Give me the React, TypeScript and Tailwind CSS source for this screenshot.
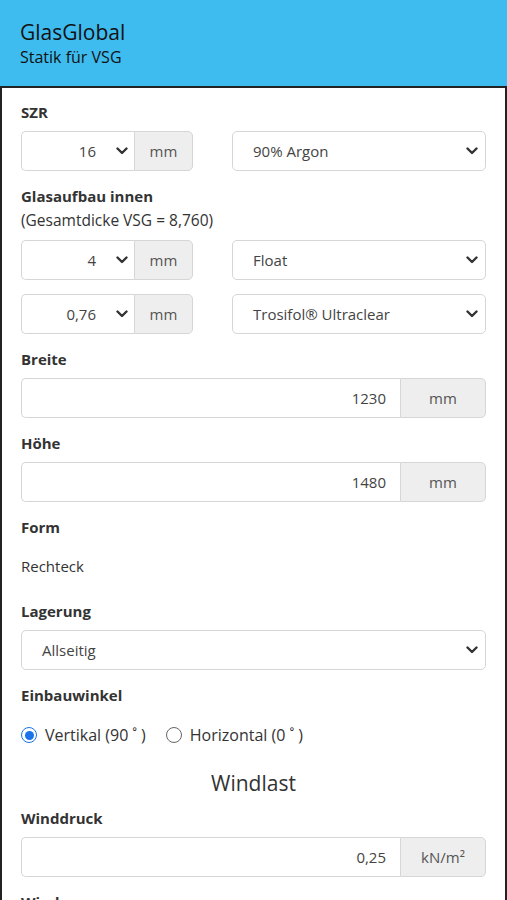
function Chevron() {
  return (
    <svg width="12" height="8" viewBox="0 0 12 8" fill="none" className="shrink-0">
      <path d="M1.5 1.5 L6 6 L10.5 1.5" stroke="#333" strokeWidth="2.4" strokeLinecap="round" strokeLinejoin="round" />
    </svg>
  );
}

function SmallSelect({ value }: { value: string }) {
  return (
    <div className="flex h-10 items-stretch">
      <div className="flex flex-1 items-center justify-end gap-[20px] rounded-l-[5px] border border-r-0 border-[#d6d6d6] bg-white pr-[6px] text-[#444]">
        <span>{value}</span>
        <Chevron />
      </div>
      <div className="flex w-[59px] items-center justify-center rounded-r-[5px] border border-[#d6d6d6] bg-[#eee] text-[#555]">
        mm
      </div>
    </div>
  );
}

function WideSelect({ value }: { value: string }) {
  return (
    <div className="flex h-10 items-center justify-between rounded-[5px] border border-[#d6d6d6] bg-white pl-[20px] pr-[7px] text-[#444]">
      <span>{value}</span>
      <Chevron />
    </div>
  );
}

function NumberInput({ value, unit }: { value: string; unit: string }) {
  return (
    <div className="flex h-10 items-stretch">
      <div className="flex flex-1 items-center justify-end rounded-l-[5px] border border-r-0 border-[#d6d6d6] bg-white pr-[14px] text-[#444]">
        {value}
      </div>
      <div className="flex w-[86px] items-center justify-center rounded-r-[5px] border border-[#d6d6d6] bg-[#eee] text-[#555]">
        {unit}
      </div>
    </div>
  );
}

function Label({ children }: { children: React.ReactNode }) {
  return <div className="mb-[9px] font-bold text-[#333]">{children}</div>;
}

export default function App() {
  return (
    <div className="min-h-[900px] bg-white text-[15px] leading-[20px] text-[#333] [font-family:'Open_Sans',sans-serif]">
      {/* Header */}
      <div className="h-[86px] bg-[#3fbcef] px-[20px] pt-[20px]">
        <div className="text-[21px] leading-[24px] text-[#111]">GlasGlobal</div>
        <div className="mt-[4px] text-[16px] font-medium leading-[18px] text-[#111]">Statik für VSG</div>
      </div>

      {/* Panel */}
      <div className="border-x-2 border-t-2 border-[#222] px-[19px] pt-[14px] pb-10">
        <Label>SZR</Label>
        <div className="grid grid-cols-[172px_1fr] gap-x-[39px]">
          <SmallSelect value="16" />
          <WideSelect value="90% Argon" />
        </div>

        <div className="mt-[15px] font-bold">Glasaufbau innen</div>
        <div className="mb-[10px] mt-[4px] text-[15.5px]">(Gesamtdicke VSG = 8,760)</div>
        <div className="grid grid-cols-[172px_1fr] gap-x-[39px] gap-y-[14px]">
          <SmallSelect value="4" />
          <WideSelect value="Float" />
          <SmallSelect value="0,76" />
          <WideSelect value="Trosifol® Ultraclear" />
        </div>

        <div className="mt-[15px]">
          <Label>Breite</Label>
          <NumberInput value="1230" unit="mm" />
        </div>

        <div className="mt-[15px]">
          <Label>Höhe</Label>
          <NumberInput value="1480" unit="mm" />
        </div>

        <div className="mt-[15px] font-bold">Form</div>
        <div className="mt-[19px]">Rechteck</div>

        <div className="mt-[25px]">
          <Label>Lagerung</Label>
          <WideSelect value="Allseitig" />
        </div>

        <div className="mt-[15px] font-bold">Einbauwinkel</div>
        <div className="mt-[20px] flex items-center text-[16px]">
          <span className="flex h-[16px] w-[16px] items-center justify-center rounded-full border-[1.5px] border-[#1a73e8] bg-white">
            <span className="h-[9px] w-[9px] rounded-full bg-[#1a73e8]" />
          </span>
          <span className="ml-[8px]">
            Vertikal (90<span className="mx-[4px]">˚</span>)
          </span>
          <span className="ml-[20px] h-[16px] w-[16px] rounded-full border-[1.5px] border-[#666] bg-white" />
          <span className="ml-[8px]">
            Horizontal (0<span className="mx-[4px]">˚</span>)
          </span>
        </div>

        <div className="mt-[25px] text-center text-[21px] leading-[26px]">Windlast</div>

        <div className="mt-[12px]">
          <Label>Winddruck</Label>
          <NumberInput value="0,25" unit="kN/m²" />
        </div>

        <div className="mt-[15px] font-bold">Windsog</div>
      </div>
    </div>
  );
}
